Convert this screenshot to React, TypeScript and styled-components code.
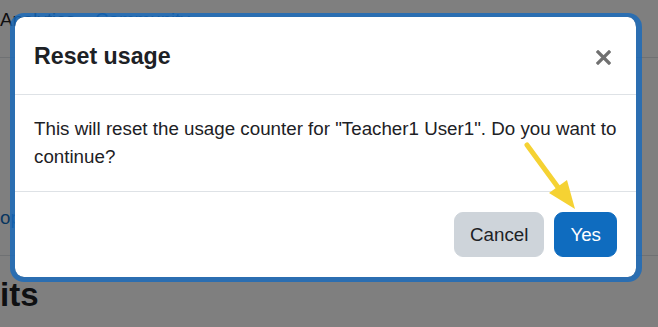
import * as React from 'react';
import styled, { createGlobalStyle } from 'styled-components';

const GlobalStyle = createGlobalStyle`
    html, body {
        margin: 0;
        padding: 0;
        background: #fff;
    }
    body {
        font-family: "Liberation Sans", Arial, sans-serif;
        color: #1d2125;
    }
`;

const Page = styled.div`
    position: relative;
    width: 658px;
    height: 327px;
    overflow: hidden;
    background: #fff;
`;

const Nav = styled.nav`
    display: flex;
    gap: 20px;
    padding: 6px 0 23px 0;
    border-bottom: 1px solid #dee2e6;
    font-size: 18.75px;
    line-height: 28px;
`;

const NavItem = styled.span<{ $link?: boolean }>`
    color: ${p => (p.$link ? '#0f6cbf' : '#1d2125')};
`;

const Tabs = styled.div`
    display: flex;
    padding: 146px 0 23px 0;
    border-bottom: 1px solid #dee2e6;
    font-size: 18.75px;
    line-height: 28px;
`;

const TabLink = styled.span`
    color: #0f6cbf;
`;

const Heading = styled.h2`
    margin: 19px 0 0 0;
    font-size: 33px;
    line-height: 1.2;
    font-weight: 700;
    color: #1d2125;
`;

const Backdrop = styled.div`
    position: absolute;
    inset: 0;
    background: rgba(0, 0, 0, 0.5);
`;

const Modal = styled.div`
    position: absolute;
    left: 10px;
    top: 13px;
    width: 632px;
    box-sizing: border-box;
    display: flex;
    flex-direction: column;
    background: #fff;
    background-clip: padding-box;
    border-style: solid;
    border-color: rgba(23, 106, 190, 0.8);
    border-width: 4px 6px 5px 5px;
    border-radius: 14px;
`;

const Header = styled.div`
    display: flex;
    align-items: center;
    padding: 25px 20px 24px 19px;
    border-bottom: 1px solid #dee2e6;
`;

const Title = styled.h5`
    flex: 1;
    margin: 0;
    font-size: 23.2px;
    line-height: 28px;
    font-weight: 700;
    color: #1d2125;
`;

const Close = styled.button`
    display: flex;
    padding: 0;
    margin: 3px 5px 0 0;
    border: none;
    background: none;
    cursor: pointer;
`;

const Body = styled.div`
    padding: 20px 14px 20px 19px;
    font-size: 18.75px;
    line-height: 28px;
    color: #1d2125;
`;

const Footer = styled.div`
    display: flex;
    justify-content: flex-end;
    gap: 10px;
    padding: 20px 19px 20px 20px;
    border-top: 1px solid #dee2e6;
`;

const Button = styled.button<{ $primary?: boolean }>`
    font-family: "Liberation Sans", Arial, sans-serif;
    font-size: 18.75px;
    line-height: 28px;
    padding: 7.5px 15px;
    border: 1px solid ${p => (p.$primary ? '#0f6cbf' : '#ced4da')};
    border-radius: 9px;
    background: ${p => (p.$primary ? '#0f6cbf' : '#ced4da')};
    color: ${p => (p.$primary ? '#fff' : '#1d2125')};
    cursor: pointer;
`;

const Arrow = styled.svg`
    position: absolute;
    left: 520px;
    top: 138px;
`;

const App = (): JSX.Element => {
    return (
        <Page>
            <GlobalStyle />
            <Nav>
                <NavItem>Analytics</NavItem>
                <NavItem $link>Community</NavItem>
            </Nav>
            <Tabs>
                <TabLink>op</TabLink>
            </Tabs>
            <Heading>its</Heading>
            <Backdrop />
            <Modal role="dialog">
                <Header>
                    <Title>Reset usage</Title>
                    <Close aria-label="Close">
                        <svg width="15" height="15" viewBox="0 0 15 15">
                            <path d="M2 2 L13 13 M13 2 L2 13" stroke="#707070" strokeWidth="3.2" strokeLinecap="square" />
                        </svg>
                    </Close>
                </Header>
                <Body>
                    This will reset the usage counter for "Teacher1 User1". Do you want to continue?
                </Body>
                <Footer>
                    <Button>Cancel</Button>
                    <Button $primary>Yes</Button>
                </Footer>
            </Modal>
            <Arrow width="64" height="80" viewBox="0 0 64 80">
                <line x1="7" y1="7" x2="40" y2="52" stroke="#f5d233" strokeWidth="5" strokeLinecap="round" />
                <polygon points="29,55 47,42 55,71" fill="#f5d233" />
            </Arrow>
        </Page>
    );
};

export default App;
